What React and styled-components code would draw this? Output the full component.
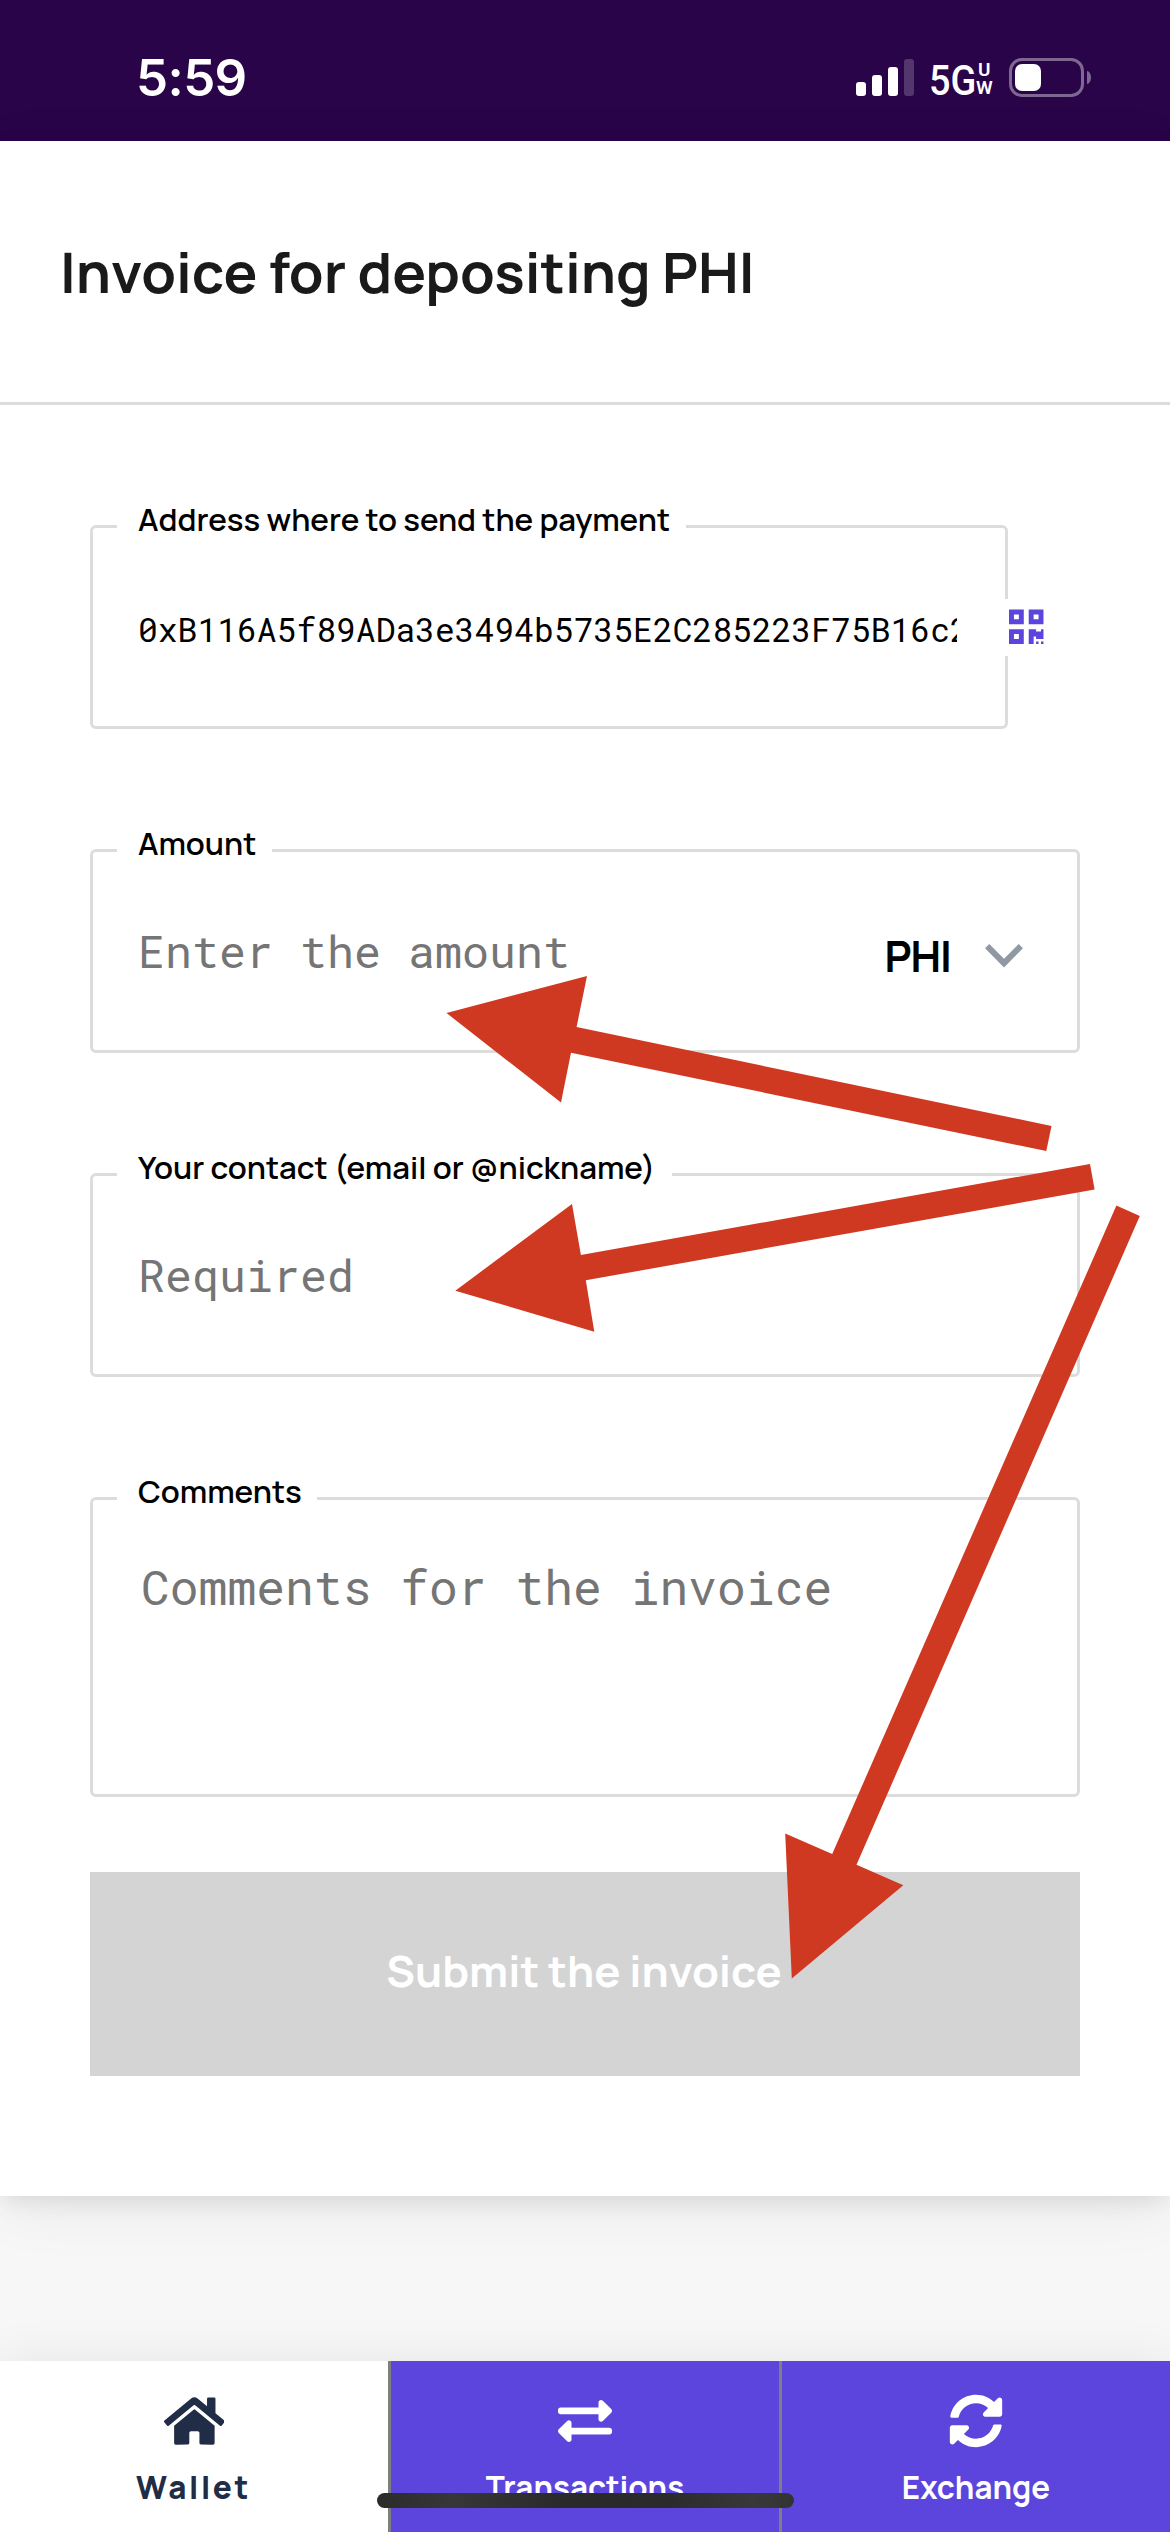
import React from "react";
import styled, { createGlobalStyle } from "styled-components";
import { FaHome, FaExchangeAlt, FaSyncAlt, FaQrcode } from "react-icons/fa";

const GlobalStyle = createGlobalStyle`
  * { box-sizing: border-box; }
  body { margin: 0; background: #f7f7f7; }
`;

const sans = `Manrope, Inter, "Liberation Sans", sans-serif`;
const mono = `"Roboto Mono", "DejaVu Sans Mono", "Liberation Mono", monospace`;

const Screen = styled.div`
  position: relative;
  width: 1170px;
  height: 2532px;
  overflow: hidden;
  display: flex;
  flex-direction: column;
  background: #f7f7f7;
  font-family: ${sans};
`;

const StatusBar = styled.div`
  flex: none;
  height: 141px;
  padding: 14px 79px 0 136px;
  display: flex;
  align-items: center;
  justify-content: space-between;
  background: #290449;
  color: #fff;
`;

const Clock = styled.span`
  font: 600 51px/60px Inter, sans-serif;
  letter-spacing: -0.6px;
  padding-top: 1px;
`;

const StatusIcons = styled.div`
  display: flex;
  align-items: center;
`;

const Signal = styled.div`
  display: flex;
  align-items: flex-end;
  gap: 6px;
  height: 37px;
  margin-right: 15px;
`;

const SignalBar = styled.span`
  width: 10px;
  height: ${(p) => p.$h}px;
  border-radius: 3px;
  background: ${(p) => (p.$off ? "rgba(255,255,255,0.2)" : "#fff")};
`;

const Network = styled.div`
  display: flex;
  align-items: center;
  width: 65px;
  margin-right: 15px;
`;

const NetworkName = styled.span`
  flex: none;
  width: 47px;
  font: 500 43px/44px Roboto, sans-serif;
  transform: scaleX(0.88);
  transform-origin: left center;
  margin-top: 4px;
`;

const NetworkBand = styled.span`
  display: flex;
  flex-direction: column;
  align-items: center;
  font: 600 19px/18px Roboto, sans-serif;
  margin-top: 2px;
`;

const Battery = styled.div`
  width: 75px;
  height: 39px;
  padding: 3px;
  border: 3px solid rgba(255, 255, 255, 0.4);
  border-radius: 13px;
`;

const BatteryLevel = styled.div`
  width: 26px;
  height: 27px;
  border-radius: 7px;
  background: #fff;
`;

const BatteryTip = styled.span`
  width: 4px;
  height: 13px;
  margin-left: 3px;
  border-radius: 0 4px 4px 0 / 0 6.5px 6.5px 0;
  background: rgba(255, 255, 255, 0.4);
`;

const Card = styled.main`
  flex: none;
  height: 2055px;
  background: #fff;
  box-shadow: 0 6px 24px -3px rgba(0, 0, 0, 0.11), 0 12px 60px rgba(0, 0, 0, 0.06);
`;

const Header = styled.header`
  height: 264px;
  padding: 0 60px;
  display: flex;
  align-items: center;
  border-bottom: 3px solid #dcdcdc;
`;

const Title = styled.h1`
  margin: 0;
  font-size: 56.4px;
  line-height: 70px;
  font-weight: 700;
  color: #1a1a1a;
  white-space: nowrap;
`;

const Form = styled.div`
  padding: 120px 90px;
  display: flex;
  flex-direction: column;
  gap: 120px;
`;

const FieldRow = styled.div`
  display: flex;
  align-items: center;
`;

const Field = styled.div`
  width: ${(p) => p.$w || 990}px;
  height: ${(p) => p.$h || 204}px;
  border: 3px solid #dcdcdc;
  border-radius: 6px;
  display: flex;
  flex-direction: column;
`;

const Legend = styled.label`
  flex: none;
  align-self: flex-start;
  width: ${(p) => p.$w}px;
  height: 40px;
  margin: -29px 0 0 24px;
  padding-left: 21px;
  background: #fff;
  color: #000;
  font-size: 31.2px;
  line-height: 40px;
  font-weight: 600;
  white-space: nowrap;
`;

const Control = styled.div`
  flex: 1;
  display: flex;
  align-items: center;
  justify-content: space-between;
  padding: 0 48px 11px 45px;
`;

const Value = styled.span`
  flex: 1;
  overflow: hidden;
  white-space: nowrap;
  font: 400 33px/44px ${mono};
  padding-top: 3px;
  color: #000;
`;

const Placeholder = styled.span`
  font: 400 45px/60px ${mono};
  font-size: ${(p) => p.$size || 45}px;
  color: #757575;
  white-space: nowrap;
`;

const CommentArea = styled.div`
  padding: 46px 0 0 48px;
`;

const QrButton = styled.button`
  width: 42px;
  height: 57px;
  margin-left: -4px;
  padding: 0 0 0 5px;
  border: 0;
  background: #fff;
  color: #5b45dc;
  display: flex;
  align-items: center;
  svg { flex: none; width: 34.5px; height: 39.4px; }
`;

const Currency = styled.div`
  display: flex;
  align-items: center;
  padding-top: 10px;
  gap: 34px;
  margin-right: 6px;
  font-size: 42.4px;
  line-height: 60px;
  font-weight: 700;
  letter-spacing: -1px;
  color: #000;
`;

const Submit = styled.button`
  width: 990px;
  height: 204px;
  margin-top: -45px;
  border: 0;
  padding: 0 2px 6px 0;
  background: #d4d4d4;
  color: #fff;
  font: 700 43.6px/60px ${sans};
`;

const Nav = styled.nav`
  flex: none;
  display: flex;
  height: 171.33px;
  margin-top: auto;
  box-shadow: 0 -3px 45px rgba(0, 0, 0, 0.07);
`;

const Tab = styled.a`
  flex: 1 0 ${(p) => (p.$active ? 388 : 391)}px;
  display: flex;
  flex-direction: column;
  align-items: center;
  gap: 19px;
  padding-top: 33px;
  border-left: ${(p) => (p.$active ? 0 : 3)}px solid #7f7f7f;
  background: ${(p) => (p.$active ? "#fff" : "#5b45dc")};
  color: ${(p) => (p.$active ? "#212c46" : "#fff")};
  svg { flex: none; height: 54px; width: ${(p) => (p.$active ? 60.75 : 54)}px; }
`;

const TabLabel = styled.span`
  font-size: 31.3px;
  line-height: 40px;
  font-weight: ${(p) => (p.$bold ? 800 : 700)};
  letter-spacing: ${(p) => p.$ls}px;
  margin-right: ${(p) => (p.$ls ? 1 : 0)}px;
`;

const HomeIndicator = styled.div`
  position: absolute;
  left: 377px;
  top: 2493px;
  width: 417px;
  height: 15px;
  border-radius: 8px;
  background: linear-gradient(90deg, #2b2b2b, #373737 18%, #2a2a2a 45%, #2b2b2b 70%, #393939 90%, #333);
`;

const Arrows = styled.svg`
  position: absolute;
  left: 0;
  top: 0;
  pointer-events: none;
`;

function Chevron() {
  return (
    <svg width="38" height="24" viewBox="0 0 38 24">
      <path d="M2.2 2.2 19 19.2 35.8 2.2" fill="none" stroke="#8f98a3" strokeWidth="6" />
    </svg>
  );
}

export default function App() {
  return (
    <Screen>
      <GlobalStyle />
      <StatusBar>
        <Clock>5:59</Clock>
        <StatusIcons>
          <Signal>
            <SignalBar $h={14} />
            <SignalBar $h={21} />
            <SignalBar $h={29} />
            <SignalBar $h={37} $off />
          </Signal>
          <Network>
            <NetworkName>5G</NetworkName>
            <NetworkBand>
              <span>U</span>
              <span>W</span>
            </NetworkBand>
          </Network>
          <Battery>
            <BatteryLevel />
          </Battery>
          <BatteryTip />
        </StatusIcons>
      </StatusBar>

      <Card>
        <Header>
          <Title>Invoice for depositing PHI</Title>
        </Header>
        <Form>
          <FieldRow>
            <Field $w={918}>
              <Legend $w={569}>Address where to send the payment</Legend>
              <Control>
                <Value>0xB116A5f89ADa3e3494b5735E2C285223F75B16c2</Value>
              </Control>
            </Field>
            <QrButton aria-label="QR">
              <FaQrcode />
            </QrButton>
          </FieldRow>
          <Field>
            <Legend $w={155}>Amount</Legend>
            <Control>
              <Placeholder>Enter the amount</Placeholder>
              <Currency>
                PHI
                <Chevron />
              </Currency>
            </Control>
          </Field>
          <Field>
            <Legend $w={555}>Your contact (email or @nickname)</Legend>
            <Control>
              <Placeholder>Required</Placeholder>
            </Control>
          </Field>
          <Field $h={300}>
            <Legend $w={200}>Comments</Legend>
            <CommentArea>
              <Placeholder $size={48}>Comments for the invoice</Placeholder>
            </CommentArea>
          </Field>
          <Submit>Submit the invoice</Submit>
        </Form>
      </Card>

      <Nav>
        <Tab $active>
          <FaHome />
          <TabLabel $bold $ls={2.6}>Wallet</TabLabel>
        </Tab>
        <Tab>
          <FaExchangeAlt />
          <TabLabel $ls={0}>Transactions</TabLabel>
        </Tab>
        <Tab>
          <FaSyncAlt />
          <TabLabel $ls={0}>Exchange</TabLabel>
        </Tab>
      </Nav>

      <HomeIndicator />
      <Arrows width="1170" height="2532" viewBox="0 0 1170 2532" fill="#d03921">
        <polygon points="446.5,1013 587,976 576.6,1027 1051.5,1126 1046.3,1151 571,1052.7 561,1102.5" />
        <polygon points="455.3,1290.7 572,1204 580.9,1255 1090,1164 1094.6,1189.5 585.8,1280.3 594.3,1331.7" />
        <polygon points="1116.4,1205.6 1139.8,1216 856.5,1864.7 903.3,1885.3 791.8,1978.4 785.2,1833.6 832.2,1853.9" />
      </Arrows>
    </Screen>
  );
}
